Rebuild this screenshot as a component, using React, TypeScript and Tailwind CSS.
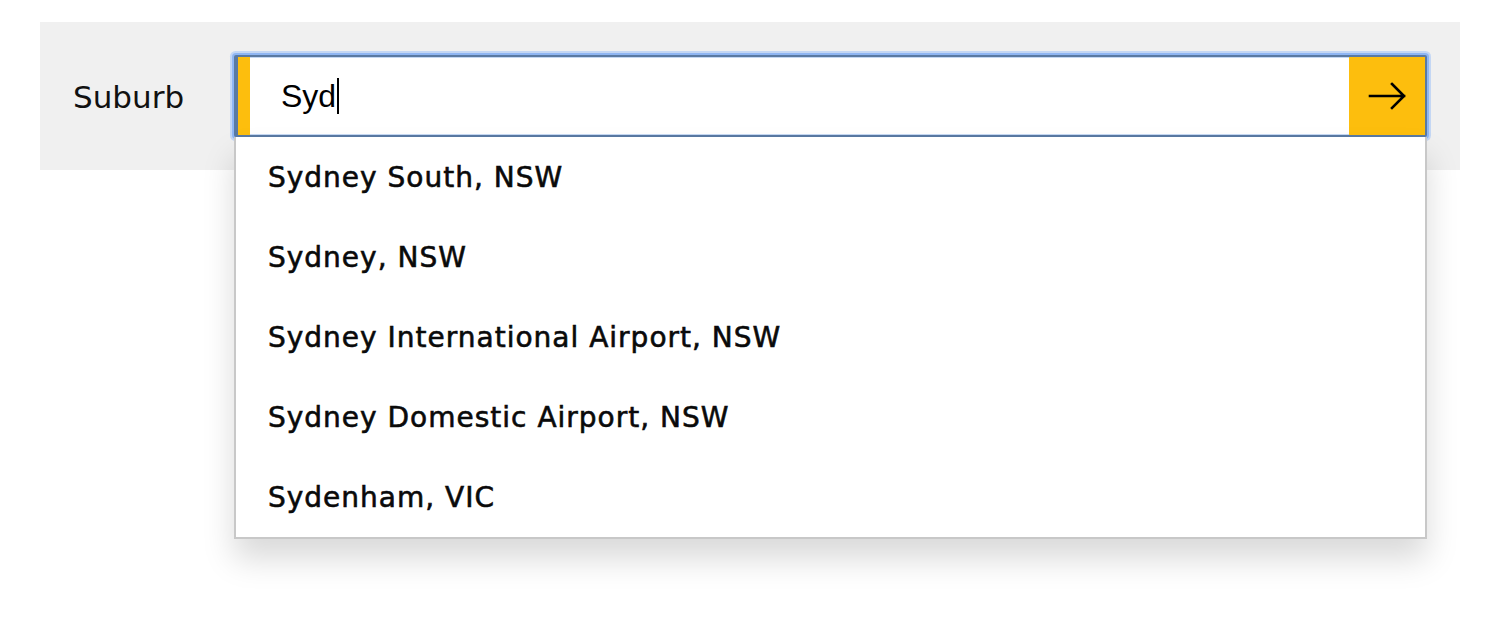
import React from "react";

const items = [
  "Sydney South, NSW",
  "Sydney, NSW",
  "Sydney International Airport, NSW",
  "Sydney Domestic Airport, NSW",
  "Sydenham, VIC",
];

export default function App() {
  return (
    <div className="w-[1496px] h-[628px] bg-white pt-[22px]">
      <div className="ml-10 mr-[36px] h-[148px] bg-[#f0f0f0] flex items-center pl-[33px] pr-[33px]">
        <div
          className="w-[161px] shrink-0 text-[31px] text-[#111] leading-none pt-[3px]"
          style={{ fontFamily: '"DejaVu Sans", sans-serif' }}
        >
          Suburb
        </div>
        <div className="relative flex-1">
          <div className="flex h-[82px] border-2 border-l-[4px] border-[#5a7aa3] rounded-[2px] shadow-[0_0_0_2px_#8fb6f3,0_0_0_4px_rgba(160,195,248,0.55)] bg-white">
            <div className="w-[12px] bg-[#fdbe0d] shrink-0" />
            <div className="flex-1 flex items-center pl-[31px] border-y border-[#c5d8f3]">
              <span
                className="text-[32px] text-black leading-none"
                style={{ fontFamily: '"Liberation Sans", Arial, sans-serif' }}
              >
                Syd
              </span>
              <span className="w-[2px] h-[36px] bg-black ml-[1px]" />
            </div>
            <button className="w-[76px] shrink-0 bg-[#fdbe0d] flex items-center justify-center">
              <svg width="40" height="30" viewBox="0 0 40 30" fill="none">
                <path
                  d="M3 15 H37 M25 3 L37 15 L25 27"
                  stroke="#000"
                  strokeWidth="2.6"
                  strokeLinecap="square"
                />
              </svg>
            </button>
          </div>
          <div className="absolute left-0 right-0 top-[82px] bg-white border-2 border-t-0 border-[#c8c8c8] shadow-[0_20px_30px_rgba(0,0,0,0.15)] z-10">
            {items.map((t) => (
              <div
                key={t}
                className="h-[80px] flex items-center pl-[32px] pt-[2px] text-[28px] tracking-[1px] text-[#0a0a0a] [-webkit-text-stroke:0.6px_#0a0a0a]"
                style={{ fontFamily: '"DejaVu Sans", sans-serif' }}
              >
                {t}
              </div>
            ))}
          </div>
        </div>
      </div>
    </div>
  );
}
